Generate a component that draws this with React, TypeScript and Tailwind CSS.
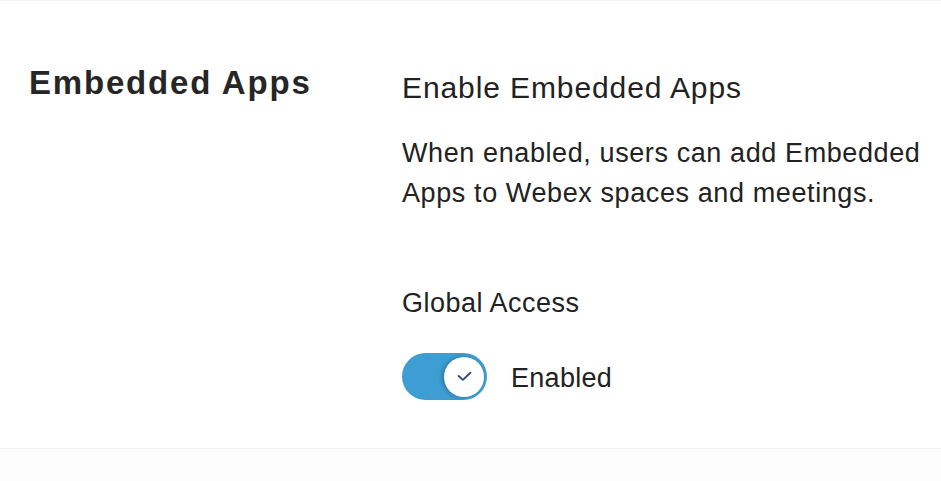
import React from 'react';

function Toggle() {
  return (
    <div className="relative h-[47px] w-[85px] rounded-full bg-[#3e9dd2]">
      <div className="absolute right-[3px] top-[3.5px] flex h-[40px] w-[40px] items-center justify-center rounded-full bg-white shadow-[-2px_0_4px_rgba(0,0,0,0.25)]">
        <svg width="15" height="11" viewBox="0 0 14 10" fill="none">
          <polyline points="1.5,4.5 5.5,8.2 12.5,1.5" stroke="#2f4e6e" strokeWidth="1.7" strokeLinecap="round" strokeLinejoin="round" />
        </svg>
      </div>
    </div>
  );
}

export default function App() {
  return (
    <div
      className="flex h-[481px] w-[941px] flex-col bg-[#fdfdfd] text-[#222222]"
      style={{ fontFamily: '"Helvetica Neue", Helvetica, "Liberation Sans", Arial, sans-serif' }}
    >
      <div className="flex h-[449px] border-y border-[#f3f3f3] bg-white">
        {/* Section title */}
        <div className="w-[402px] pl-[29px] pt-[65px]">
          <h1 className="text-[33px] font-bold leading-none tracking-[1.8px] text-[#262626]">Embedded Apps</h1>
        </div>

        {/* Settings */}
        <div className="flex-1 pt-[72px]">
          <h2 className="text-[30px] leading-none tracking-[0.9px]">Enable Embedded Apps</h2>
          <p className="mt-[30px] text-[27px] leading-[40px] tracking-[0.6px]">
            When enabled, users can add Embedded
            <br />
            Apps to Webex spaces and meetings.
          </p>

          <h3 className="mt-[77px] text-[27px] leading-none tracking-[0.5px]">Global Access</h3>
          <div className="mt-[36px] flex items-center gap-[24px]">
            <Toggle />
            <span className="pt-[4px] text-[27px] leading-none tracking-[0.3px]">Enabled</span>
          </div>
        </div>
      </div>
    </div>
  );
}
